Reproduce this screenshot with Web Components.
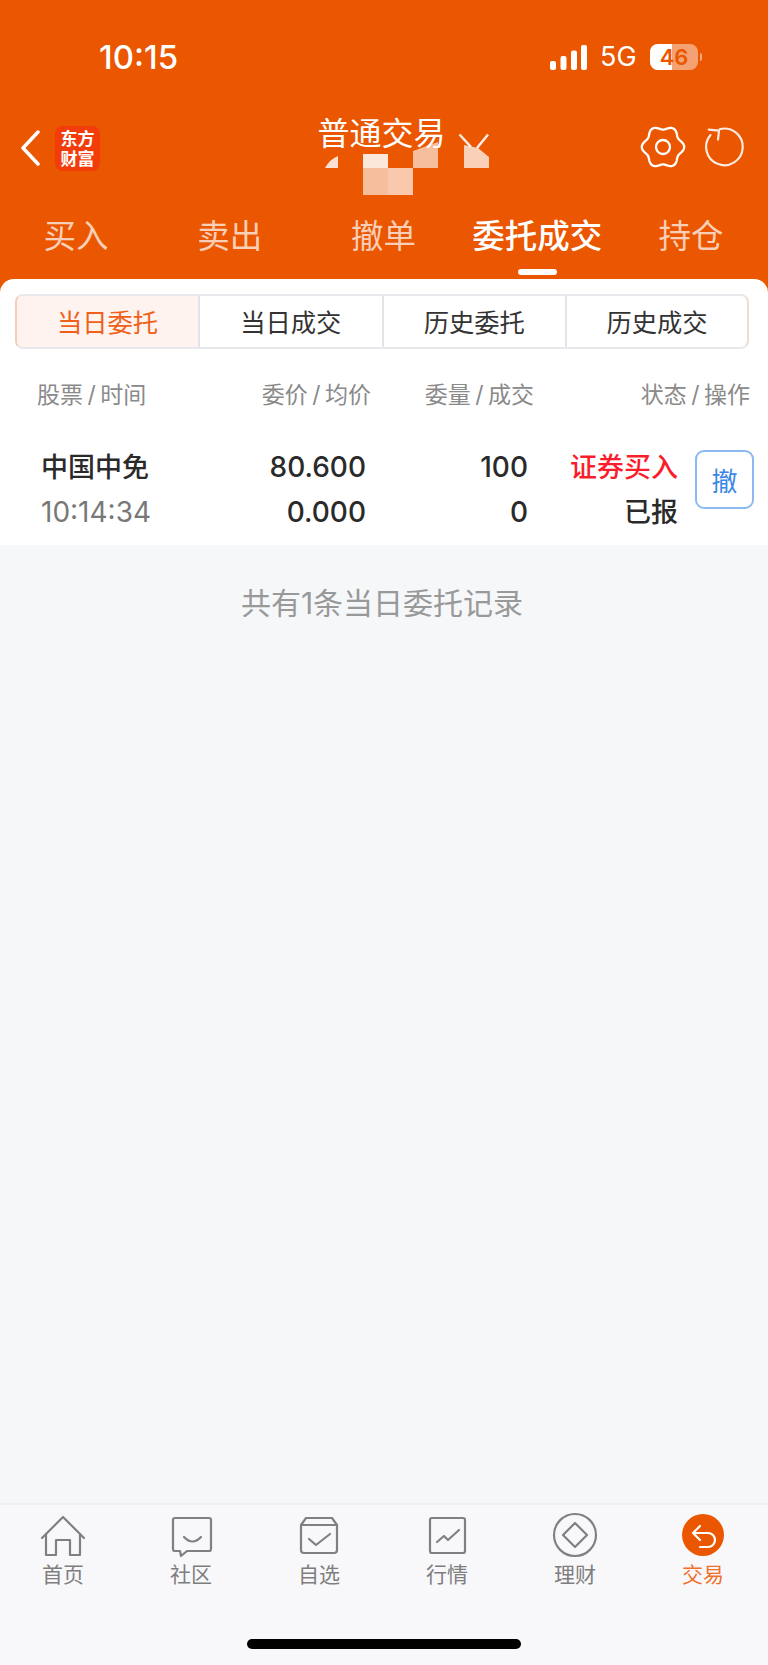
<!DOCTYPE html>
<html lang="zh">
<head>
<meta charset="utf-8">
<title>普通交易</title>
<style>
html,body{margin:0;padding:0}
body{width:768px;height:1665px;overflow:hidden;display:flex;flex-direction:column;background:#F6F7F9;font-family:Inter,"Noto Sans CJK SC",sans-serif}
app-header{flex:none}
order-panel{flex:none}
empty-note{flex:1 1 auto}
bottom-nav{flex:none}
</style>
</head>
<body>
<app-header>
  <status-bar time="10:15" net="5G" battery="46"></status-bar>
  <nav-bar title="普通交易"></nav-bar>
  <trade-tabs active="3" items="买入,卖出,撤单,委托成交,持仓"></trade-tabs>
</app-header>
<order-panel>
  <seg-control active="0" items="当日委托,当日成交,历史委托,历史成交"></seg-control>
  <order-head></order-head>
  <order-row name="中国中免" time="10:14:34" price="80.600" avg="0.000" qty="100" done="0" side="证券买入" state="已报"></order-row>
</order-panel>
<empty-note>共有1条当日委托记录</empty-note>
<bottom-nav></bottom-nav>

<script>
function def(name, css, render){
  customElements.define(name, class extends HTMLElement{
    connectedCallback(){
      if(this.shadowRoot) return;
      const r=this.attachShadow({mode:'open'});
      r.innerHTML='<style>'+css+'</style>'+render(this);
    }
  });
}

def('app-header',`:host{display:block;background:#EB5600;color:#fff}`,()=>'<slot></slot>');

def('status-bar',`
:host{display:flex;height:100px;box-sizing:border-box;padding:39px 66px 0 99px;justify-content:space-between;align-items:flex-start}
.t{font:500 33px/36px Inter,sans-serif}
.r{display:flex;align-items:center;height:36px;margin-left:auto}
.sig{display:block;margin-right:13px}
.n{font:400 27px/36px Inter,sans-serif;margin-right:14px;width:36px;white-space:nowrap}
.b{position:relative;width:48px;height:26px;border-radius:8px;background:rgba(255,255,255,.45);color:#EB5600;font:600 22px/26px Inter,sans-serif;text-align:center}
.b i{position:absolute;left:0;top:0;bottom:0;width:22px;background:#fff;border-radius:8px 0 0 8px}
.b span{position:relative}
.c{width:2px;height:8px;background:rgba(255,255,255,.5);border-radius:0 2px 2px 0;margin-left:2px}
`,h=>`<div class="t">${h.getAttribute('time')}</div>
<div class="r">
<svg class="sig" width="37" height="25" viewBox="0 0 37 25" fill="#fff"><rect x="0" y="16" width="6" height="9" rx="2"/><rect x="10.500" y="11" width="6" height="14" rx="2"/><rect x="21" y="5.500" width="6" height="19.500" rx="2"/><rect x="31" y="0" width="6" height="25" rx="2"/></svg>
<div class="n">${h.getAttribute('net')}</div>
<div class="b"><i></i><span>${h.getAttribute('battery')}</span></div><div class="c"></div>
</div>`);

function gearPath(cx,cy){
  let d='';
  for(let i=0;i<=180;i++){
    const a=i/180*Math.PI*2;
    const r=19.3-1.9*Math.cos(6*a);
    d+=(i?'L':'M')+(cx+r*Math.sin(a)).toFixed(2)+' '+(cy-r*Math.cos(a)).toFixed(2);
  }
  return d+'Z';
}

def('nav-bar',`
:host{display:grid;grid-template-columns:1fr auto 1fr;height:96px;position:relative;box-sizing:border-box;padding:0 20px}
.l,.rr{display:flex;align-items:center}
.rr{justify-content:flex-end;gap:13px;padding-bottom:2px}
.logo{width:45px;height:45px;border-radius:8px;background:#F23D0B;margin-left:15px;color:#fff;font:700 17px/20px "Noto Sans CJK SC",sans-serif;text-align:center;display:flex;flex-direction:column;justify-content:center}
.title{font:400 32px/38px "Noto Sans CJK SC",sans-serif;padding:12px 5px 0 0}
.mask{position:absolute;left:0;top:0;pointer-events:none}
`,h=>`<div class="l">
<svg width="20" height="36" viewBox="0 0 20 36" fill="none" stroke="#fff" stroke-width="3.500" stroke-linecap="round" stroke-linejoin="round"><path d="M18 2 3 18 18 34"/></svg>
<div class="logo"><span>东方</span><span>财富</span></div>
</div>
<div class="title">${h.getAttribute('title')}</div>
<div class="rr">
<svg width="48" height="48" viewBox="0 0 48 48" fill="none" stroke="#fff" stroke-width="2.300" stroke-linejoin="round"><path d="${gearPath(24,24)}"/><circle cx="24" cy="24" r="7"/></svg>
<svg width="48" height="48" viewBox="0 0 48 48" fill="none" stroke="#fff" stroke-opacity=".88" stroke-width="2.200" stroke-linecap="round" stroke-linejoin="round"><path d="M10.500 12A18.300 18.300 0 1 0 19.700 6.200"/><path d="M8.700 6.700 19 7.700 18 16.700"/></svg>
</div>
<svg class="mask" width="768" height="96" viewBox="0 0 768 96">
<path d="M325 68Q330 59 338 56V68Z" fill="#fff" fill-opacity=".82"/>
<rect x="363" y="54" width="25" height="14" fill="#fff" fill-opacity=".86"/>
<rect x="363" y="68" width="25" height="27" fill="#fff" fill-opacity=".62"/>
<rect x="388" y="68" width="25" height="27" fill="#fff" fill-opacity=".68"/>
<path d="M413 51 438 42V68H413Z" fill="#fff" fill-opacity=".62"/>
<path d="M464 45 478 48 489 57V68H464Z" fill="#fff" fill-opacity=".72"/>
<path d="M459.500 34.500 471 47M488 34.500 477 48" fill="none" stroke="#fff" stroke-width="2.500" stroke-opacity=".9"/>
</svg>`);

def('trade-tabs',`
:host{display:grid;grid-template-columns:repeat(5,1fr);height:83px;position:relative;margin-left:-1px}
div{font:400 32.500px/38px "Noto Sans CJK SC",sans-serif;text-align:center;padding-top:19px;color:rgba(255,255,255,.72);white-space:nowrap}
.on{color:#fff;font-weight:500;position:relative}
.on::after{content:"";position:absolute;left:50%;margin-left:-19.500px;bottom:4px;width:39px;height:6px;border-radius:3px;background:#fff}
`,h=>{const a=+h.getAttribute('active');return h.getAttribute('items').split(',').map((t,i)=>`<div class="${i==a?'on':''}">${t}</div>`).join('')});

def('order-panel',`:host{display:block;background:#EB5600}
.p{background:#fff;border-radius:14px 14px 0 0;height:266px;box-sizing:border-box;padding-top:15px}`,()=>'<div class="p"><slot></slot></div>');

def('seg-control',`
:host{display:grid;grid-template-columns:181px 183.500px 183.500px 1fr;height:55px;margin:0 19px 0 15px;box-sizing:border-box;border:2px solid #E6E8EC;border-right-color:#EFDDD3;border-left-color:#F5CDB8;border-radius:8px;overflow:hidden;background:#fff}
div{font:400 25.300px/51px "Noto Sans CJK SC",sans-serif;text-align:center;color:#333;border-left:2px solid #E2E4E9;white-space:nowrap}
.f{border-left:0}
.on{background:#FEF3EE;color:#F0601A}
`,h=>{const a=+h.getAttribute('active');return h.getAttribute('items').split(',').map((t,i)=>`<div class="${i==a?'on':''} ${i==0?'f':''}">${t}</div>`).join('')});

def('order-head',`
:host{display:grid;grid-template-columns:210px 161px 163px 216px;height:40px;margin-top:24px;color:#8A8A8A;font:400 23px/40px "Noto Sans CJK SC",sans-serif;white-space:nowrap;box-sizing:border-box;width:750px}
div{text-align:right}
.f{text-align:left;padding-left:37px}
i{font:400 23px/40px Inter,sans-serif;padding:0 4.500px}
`,()=>`<div class="f">股票<i>/</i>时间</div><div>委价<i>/</i>均价</div><div>委量<i>/</i>成交</div><div>状态<i>/</i>操作</div>`);

def('order-row',`
:host{display:grid;grid-template-columns:205px 161px 162px 150px 76px;grid-template-rows:45px 45px;margin-top:32px;width:754px;color:#2A2A2A;font:500 28px/45px Inter,"Noto Sans CJK SC",sans-serif;white-space:nowrap}
div{text-align:right}
.a{text-align:left;padding-left:41px}
.zh{font-size:27px}
.tm{font-weight:400;color:#787878}
.s{color:#FA1E2D}
button{grid-column:5;grid-row:1/3;justify-self:end;align-self:start;width:59px;height:59px;padding:0;margin-top:5px;background:#fff;border:2px solid #8CBAF0;border-radius:9px;color:#3A87E4;font:400 26px/1 "Noto Sans CJK SC",sans-serif}
`,h=>{const g=k=>h.getAttribute(k);return `
<div class="a zh">${g('name')}</div><div>${g('price')}</div><div>${g('qty')}</div><div class="s zh">${g('side')}</div>
<button>撤</button>
<div class="a tm">${g('time')}</div><div>${g('avg')}</div><div>${g('done')}</div><div class="zh">${g('state')}</div>`});

def('empty-note',`:host{display:block;text-align:center;color:#999;font:400 30px/40px Inter,"Noto Sans CJK SC",sans-serif;padding:38px 4px 0 0;white-space:nowrap}`,()=>'<slot></slot>');

const ic={
home:'<path d="M3 27 24 6 45 27"/><path d="M7 23V44H17V29H31V44H41V23"/>',
chat:'<path d="M8 7H42A2 2 0 0 1 44 9V38A2 2 0 0 1 42 40H20L14 45 13 40H8A2 2 0 0 1 6 38V9A2 2 0 0 1 8 7Z"/><path d="M17 26Q25.500 35 34 26"/>',
watch:'<path d="M11 7H37L42 14V39A3 3 0 0 1 39 42H9A3 3 0 0 1 6 39V14Z"/><path d="M6.500 14H41.500"/><path d="M14 28 21 34 35 23"/>',
chart:'<rect x="7" y="7" width="35" height="35" rx="2"/><path d="M14 31 21 25 25 29 36 19"/>',
fin:'<circle cx="24" cy="24" r="21"/><path d="M24 12 36 24 24 36 12 24Z"/>',
trade:'<circle cx="24" cy="24" r="21" fill="#EB5600" stroke="none"/><path stroke="#fff" d="M21 15 14 22 21 29M14 22H29A7 7 0 0 1 29 36H21"/>'
};
const items=[['首页','home'],['社区','chat'],['自选','watch'],['行情','chart'],['理财','fin'],['交易','trade',1]];
def('bottom-nav',`
:host{display:block;height:162px;box-sizing:border-box;background:#F8F8FA;border-top:2px solid #EEEFF3;position:relative}
.g{display:grid;grid-template-columns:repeat(6,128px);padding-top:6px;margin-left:-1px}
.i{display:flex;flex-direction:column;align-items:center;color:#7E7E7E;font:400 21px/28px "Noto Sans CJK SC",sans-serif}
.i svg{display:block}
.on{color:#F0702A}
.h{width:274px;height:10px;border-radius:5px;background:#000;margin:52px auto 0}
`,()=>`<div class="g">${items.map(([t,k,on])=>`<div class="i ${on?'on':''}"><svg width="48" height="48" viewBox="0 0 48 48" fill="none" stroke="#808080" stroke-width="2.200" stroke-linejoin="round" stroke-linecap="round">${ic[k]}</svg>${t}</div>`).join('')}</div><div class="h"></div>`);
</script>
</body>
</html>
